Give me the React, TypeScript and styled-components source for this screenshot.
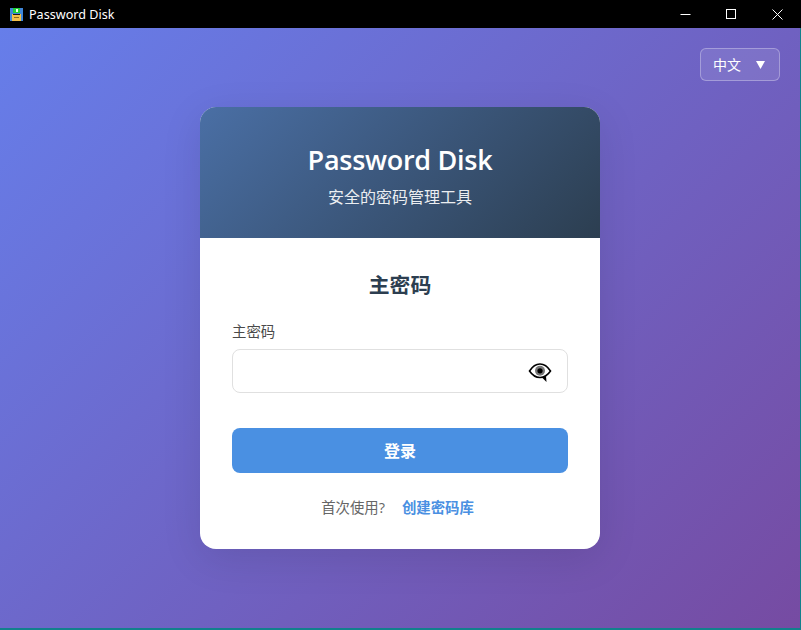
import React from 'react'
import styled, { createGlobalStyle } from 'styled-components'

const GlobalStyle = createGlobalStyle`
  html, body {
    margin: 0;
    padding: 0;
    height: 100%;
    background: #12808c;
  }
  * { box-sizing: border-box; }
  #root { height: 100%; }
`;

const Window = styled.div`
  width: 801px;
  height: 630px;
  display: flex;
  flex-direction: column;
  overflow: hidden;
  font-family: "Open Sans", "Noto Sans CJK SC", sans-serif;
`;

const TitleBar = styled.div`
  height: 28px;
  flex: none;
  background: #000;
  color: #fff;
  display: flex;
  align-items: center;
  padding: 0 1px 0 10px;
  font-size: 12.6px;
  font-family: "Noto Sans", sans-serif;
`;

const AppName = styled.span`
  margin-left: 6px;
  flex: 1;
`;

const WinButton = styled.div`
  width: 46px;
  height: 28px;
  display: flex;
  align-items: center;
  justify-content: center;
`;

const Main = styled.div`
  position: relative;
  height: 600px;
  width: 800px;
  flex: none;
  background: linear-gradient(135deg, #667eea 0%, #764ba2 100%);
  display: flex;
  align-items: center;
  justify-content: center;
`;

const LangSelect = styled.div`
  position: absolute;
  top: 20px;
  right: 20px;
  width: 80px;
  height: 33px;
  border: 1px solid rgba(255, 255, 255, 0.3);
  border-radius: 6px;
  background: rgba(255, 255, 255, 0.1);
  color: #fff;
  font-size: 14px;
  line-height: 29px;
  display: flex;
  align-items: center;
  justify-content: space-between;
  padding: 0 14px 0 12px;
`;

const LangArrow = styled.svg`
  margin-top: 1px;
`;

const Card = styled.div`
  width: 400px;
  border-radius: 16px;
  overflow: hidden;
  background: #fff;
  box-shadow: 0 10px 40px rgba(0, 0, 0, 0.1);
`;

const CardHeader = styled.div`
  height: 131px;
  background: linear-gradient(135deg, #4a6fa5 0%, #2c3e50 100%);
  color: #fff;
  text-align: center;
  padding-top: 32px;
`;

const Title = styled.h1`
  margin: 0;
  font-size: 27px;
  letter-spacing: -0.28px;
  line-height: 42px;
  font-weight: 600;
`;

const Subtitle = styled.p`
  margin: 4px 0 0;
  font-size: 16px;
  line-height: 24px;
  opacity: 0.9;
`;

const CardBody = styled.div`
  padding: 32px;
  height: 311px;
`;

const FormTitle = styled.h2`
  margin: 0 0 22px;
  font-size: 20.8px;
  line-height: 30px;
  font-weight: 600;
  text-align: center;
  color: #2c3e50;
`;

const Label = styled.label`
  display: block;
  font-size: 14.4px;
  line-height: 20px;
  color: #4a4a4a;
  margin-bottom: 7px;
`;

const InputRow = styled.div`
  position: relative;
  height: 44px;
  margin-bottom: 35px;
`;

const Input = styled.input`
  width: 100%;
  height: 100%;
  border: 1px solid #e0e0e0;
  border-radius: 8px;
  background: #fff;
  outline: none;
`;

const EyeButton = styled.div`
  position: absolute;
  right: 16px;
  top: 13px;
  width: 24px;
  height: 20px;
  display: flex;
  align-items: center;
  justify-content: center;
`;

const SubmitButton = styled.button`
  display: block;
  width: 100%;
  height: 45px;
  padding: 0 0 2px;
  border: none;
  border-radius: 8px;
  background: #4a90e2;
  color: #fff;
  font-family: inherit;
  font-size: 16px;
  font-weight: 600;
`;

const Footer = styled.div`
  margin-top: 24px;
  padding-right: 5px;
  text-align: center;
  font-size: 14.4px;
  line-height: 22px;
  color: #666;
`;

const FooterLink = styled.a`
  margin-left: 17px;
  color: #4a90e2;
  font-weight: 600;
`;

const SaveIcon = () => (
  <svg width="13" height="13" viewBox="0 0 13 13">
    <rect x="0" y="0" width="13" height="13" fill="#3f86d8" />
    <rect x="3" y="0" width="7" height="5" fill="#1fd03a" />
    <rect x="6" y="1" width="2" height="3" fill="#eafff0" />
    <rect x="2" y="6" width="9" height="7" fill="#f3c04a" />
    <rect x="3" y="6" width="7" height="1" fill="#1a1a1a" />
    <rect x="4" y="9" width="5" height="1" fill="#8a6a20" />
  </svg>
);

const EyeIcon = () => (
  <svg width="24" height="20" viewBox="0 0 24 20">
    <path d="M1.5 9 C5 3.5 9 2 12 2 C15 2 19 3.5 22.5 9 C19.5 13.5 16 15.5 12 15.5 C8 15.5 4.5 13.5 1.5 9 Z" fill="#fff" stroke="#000" strokeWidth="1.6" />
    <circle cx="12" cy="8.8" r="5" fill="#777" />
    <circle cx="12" cy="8.8" r="2.6" fill="#000" />
    <path d="M13.5 15 L18 14.5 L18.5 20 Z" fill="#000" />
  </svg>
);

const App = () => {
  return (
    <Window>
      <GlobalStyle />
      <TitleBar>
        <SaveIcon />
        <AppName>Password Disk</AppName>
        <WinButton>
          <svg width="11" height="11" viewBox="0 0 11 11"><path d="M0.5 5.5H10.5" stroke="#fff" /></svg>
        </WinButton>
        <WinButton>
          <svg width="11" height="11" viewBox="0 0 11 11"><rect x="0.5" y="0.5" width="9" height="9" fill="none" stroke="#fff" /></svg>
        </WinButton>
        <WinButton>
          <svg width="11" height="11" viewBox="0 0 11 11"><path d="M0.5 0.5L10.5 10.5M10.5 0.5L0.5 10.5" stroke="#fff" /></svg>
        </WinButton>
      </TitleBar>
      <Main>
        <LangSelect>
          <span>中文</span>
          <LangArrow width="9" height="8" viewBox="0 0 9 8"><path d="M0 0H9L4.5 8Z" fill="#fff" /></LangArrow>
        </LangSelect>
        <Card>
          <CardHeader>
            <Title>Password Disk</Title>
            <Subtitle>安全的密码管理工具</Subtitle>
          </CardHeader>
          <CardBody>
            <FormTitle>主密码</FormTitle>
            <Label>主密码</Label>
            <InputRow>
              <Input type="password" />
              <EyeButton><EyeIcon /></EyeButton>
            </InputRow>
            <SubmitButton>登录</SubmitButton>
            <Footer>
              首次使用?
              <FooterLink>创建密码库</FooterLink>
            </Footer>
          </CardBody>
        </Card>
      </Main>
    </Window>
  )
}

export default App
